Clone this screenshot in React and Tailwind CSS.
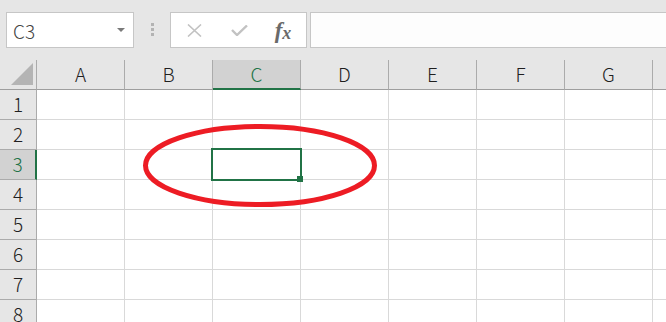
import React from "react";

const COLS = ["A", "B", "C", "D", "E", "F", "G", ""];
const ROWS = [1, 2, 3, 4, 5, 6, 7, 8];
const font = { fontFamily: '"Noto Sans CJK JP", "Noto Sans", sans-serif' };

// top bar: name box + formula bar
function FormulaBar() {
  return (
    <div className="flex h-[60px] pt-[12px]">
      <div className="ml-[6px] flex h-[36px] w-[128px] shrink-0 items-center border border-[#c6c6c6] bg-white pl-[6px] pr-[8px]">
        <span className="flex-1 text-[19px] font-light leading-none text-[#444]">C3</span>
        <svg width="8" height="5" viewBox="0 0 8 5">
          <path d="M0 0 L8 0 L4 4 Z" fill="#7a7a7a" />
        </svg>
      </div>
      <div className="flex w-[36px] shrink-0 flex-col items-center gap-[2px] pt-[11px]">
        <div className="h-[3px] w-[3px] bg-[#b3b3b3]" />
        <div className="h-[3px] w-[3px] bg-[#b3b3b3]" />
        <div className="h-[3px] w-[3px] bg-[#b3b3b3]" />
      </div>
      <div className="flex h-[36px] w-[137px] shrink-0 items-center border border-[#c6c6c6] bg-white">
        <div className="flex w-[44px] justify-center pl-[2px]">
          <svg width="15" height="13" viewBox="0 0 15 13">
            <path d="M1 0.5 L14 12.5 M14 0.5 L1 12.5" stroke="#c2c2c2" strokeWidth="1.6" />
          </svg>
        </div>
        <div className="flex w-[44px] justify-center pl-[4px]">
          <svg width="17" height="11" viewBox="0 0 17 11">
            <path d="M1 5 L6 10 L16 0.5" stroke="#c2c2c2" strokeWidth="2.4" fill="none" />
          </svg>
        </div>
        <div
          className="flex w-[44px] items-end justify-center pl-[4px] italic text-[#6a6a6a]"
          style={{ fontFamily: '"Liberation Serif", serif' }}
        >
          <span className="text-[23px] font-bold leading-none">f</span>
          <span className="text-[18px] font-bold leading-none">x</span>
        </div>
      </div>
      <div className="ml-[3px] h-[36px] w-[380px] shrink-0 border border-[#c6c6c6] bg-[#fdfdfd]" />
    </div>
  );
}

function HeaderRow() {
  return (
    <div className="flex h-[30px]">
      <div className="relative h-[30px] w-[37px] shrink-0 border-r border-b border-r-[#ababab] border-b-[#9e9e9e]">
        <svg className="absolute left-[11px] top-[3px]" width="23" height="23" viewBox="0 0 23 23">
          <path d="M0 22 L22 22 L22 0 Z" fill="#b4b4b4" />
        </svg>
      </div>
      {COLS.map((c, i) =>
        c === "C" ? (
          <div
            key={i}
            className="flex h-[30px] w-[88px] shrink-0 items-center justify-center border-r border-r-[#ababab] border-b-2 border-b-[#217346] bg-[#d2d2d2] text-[19px] font-light text-[#217346]"
          >
            {c}
          </div>
        ) : (
          <div
            key={i}
            className="flex h-[30px] w-[88px] shrink-0 items-center justify-center border-r border-b border-r-[#ababab] border-b-[#9e9e9e] text-[19px] font-light text-[#1f1f1f]"
          >
            {c}
          </div>
        )
      )}
    </div>
  );
}

function GridRow({ n }) {
  const active = n === 3;
  return (
    <div className="flex h-[30px]">
      <div
        className={
          active
            ? "flex h-[30px] w-[37px] shrink-0 items-center justify-center border-b border-b-[#ababab] border-r-2 border-r-[#217346] bg-[#d2d2d2] text-[19px] font-light text-[#217346]"
            : "flex h-[30px] w-[37px] shrink-0 items-center justify-center border-r border-b border-[#ababab] text-[19px] font-light text-[#1f1f1f]"
        }
      >
        {n}
      </div>
      {COLS.map((c, i) => (
        <div key={i} className="h-[30px] w-[88px] shrink-0 border-r border-b border-[#d9d9d9] bg-white" />
      ))}
    </div>
  );
}

export default function App() {
  return (
    <div className="relative h-[322px] w-[666px] overflow-hidden bg-[#e6e6e6]" style={font}>
      <FormulaBar />
      <HeaderRow />
      {ROWS.map((n) => (
        <GridRow key={n} n={n} />
      ))}

      {/* selected cell C3 */}
      <div className="absolute left-[211px] top-[148px] h-[33px] w-[91px] border-2 border-[#217346]" />
      <div className="absolute left-[297px] top-[176px] h-[6px] w-[6px] bg-[#217346]" />

      {/* red circle annotation */}
      <svg className="pointer-events-none absolute left-0 top-0" width="666" height="322">
        <ellipse cx="260" cy="165.5" rx="114.5" ry="39" fill="none" stroke="#ed1c24" strokeWidth="5" />
      </svg>
    </div>
  );
}
